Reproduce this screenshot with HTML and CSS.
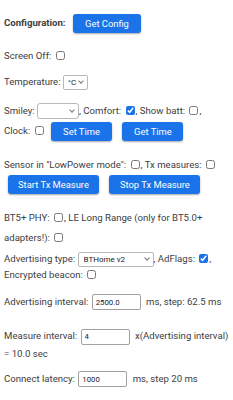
FILE: index.html
```html
<!DOCTYPE html>
<html lang="en">
<head>
  <meta charset="UTF-8">
  <meta name="viewport" content="width=device-width, initial-scale=1">
  <title>Configuration</title>
  <link rel="stylesheet" href="styles.css">
</head>
<body>

  <div class="row row-config">
    <b>Configuration:</b>
    <button class="btn btn-config">Get Config</button>
  </div>

  <div class="row row-screen">
    Screen Off: <input type="checkbox">
  </div>

  <div class="row row-temp">
    Temperature: <span class="sel-wrap"><select class="sel sel-temp"><option>°C</option><option>°F</option></select></span>
  </div>

  <div class="row row-smiley">
    Smiley: <span class="sel-wrap"><select class="sel sel-smiley"><option></option></select></span>, Comfort: <input type="checkbox" checked>, Show batt: <input type="checkbox">,
    Clock: <input type="checkbox">
    <button class="btn btn-time">Set Time</button>
    <button class="btn btn-time">Get Time</button>
  </div>

  <div class="row row-sensor">
    Sensor in "LowPower mode": <input type="checkbox">, Tx measures: <input type="checkbox">
  </div>
  <div class="row row-txbtn">
    <button class="btn btn-tx">Start Tx Measure</button>
    <button class="btn btn-tx">Stop Tx Measure</button>
  </div>

  <div class="row row-phy">
    BT5+ PHY: <input type="checkbox">, LE Long Range (only for BT5.0+ adapters!): <input type="checkbox">
  </div>

  <div class="row row-adv">
    Advertising type: <span class="sel-wrap"><select class="sel sel-adv"><option>BTHome v2</option></select></span>, AdFlags: <input type="checkbox" checked>,
    Encrypted beacon: <input type="checkbox">
  </div>

  <div class="row row-advint">
    Advertising interval: <input type="text" class="num" value="2500.0"> ms, step: 62.5 ms
  </div>

  <div class="row row-meas">
    Measure interval: <input type="text" class="num" value="4"> x(Advertising interval) = 10.0 sec
  </div>

  <div class="row row-lat">
    Connect latency: <input type="text" class="num" value="1000"> ms, step 20 ms
  </div>

  <div class="row row-next">
    LCD power: <input type="text" class="num num-wide" value="0">
  </div>

</body>
</html>
```

FILE: styles.css
```css
* {
  box-sizing: border-box;
}

body {
  margin: 0;
  padding: 0 4px;
  background: #ffffff;
  color: #3c4043;
  font-family: Roboto, 'Liberation Sans', sans-serif;
  font-size: 9.6px;
}

input[type="checkbox"] {
  width: 9px;
  height: 9px;
  margin: 0 1px 0 2px;
  vertical-align: -1px;
  accent-color: #1a73e8;
}

.btn {
  background: #1a73e8;
  color: #ffffff;
  border: none;
  border-radius: 3px;
  font-family: Roboto, 'Liberation Sans', sans-serif;
  font-size: 9.4px;
  height: 19px;
  padding: 0;
  margin: 0 4px;
  vertical-align: middle;
  box-shadow: 0 1px 2px rgba(0,0,0,0.35);
}

.btn-config { width: 68px; margin-left: 5px; }
.btn-time { width: 61px; }
.btn-tx { width: 91px; }

/* select with a small grey chevron */
.sel-wrap {
  position: relative;
  display: inline-block;
  vertical-align: middle;
  line-height: 0;
}

.sel-wrap::after {
  content: "";
  position: absolute;
  right: 5px;
  top: 50%;
  width: 3px;
  height: 3px;
  margin-top: -3px;
  border-right: 1px solid #777;
  border-bottom: 1px solid #777;
  transform: rotate(45deg);
  pointer-events: none;
}

.sel {
  appearance: none;
  -webkit-appearance: none;
  height: 15px;
  font-family: Roboto, 'Liberation Sans', sans-serif;
  font-size: 8px;
  color: #202124;
  border: 1px solid #b8b8b8;
  border-radius: 2px;
  background: #ffffff;
  padding: 0 0 0 4px;
  margin: 0;
}

.sel-temp { width: 25px; padding-left: 4px; }
.sel-smiley { width: 42px; height: 16px; border-radius: 3px; }
.sel-adv { width: 76px; padding-left: 5px; }

.num {
  width: 49px;
  height: 16px;
  font-family: Roboto, 'Liberation Sans', sans-serif;
  font-size: 7.8px;
  color: #202124;
  border: 1px solid #a0a0a0;
  border-radius: 2px;
  padding: 0 3px;
  margin: 0 3px 0 1px;
  vertical-align: middle;
}

.num-wide { width: 77px; height: 22px; vertical-align: top; }

.row-config { padding-top: 13px; line-height: 19px; }
.row-screen { margin-top: 15px; line-height: 16px; }
.row-temp { margin-top: 10px; line-height: 16px; }
.row-smiley { margin-top: 11px; line-height: 20px; }
.row-sensor { margin-top: 16px; line-height: 16px; }
.row-txbtn { margin-top: 1px; line-height: 19px; }
.row-phy { margin-top: 14px; line-height: 20px; }
.row-adv { margin-top: 3px; line-height: 16px; }
.row-advint { margin-top: 11px; line-height: 16px; }
.row-meas { margin-top: 17px; line-height: 17px; }
.row-lat { margin-top: 9px; line-height: 16px; }
.row-next { margin-top: 14px; line-height: 34px; }
```
